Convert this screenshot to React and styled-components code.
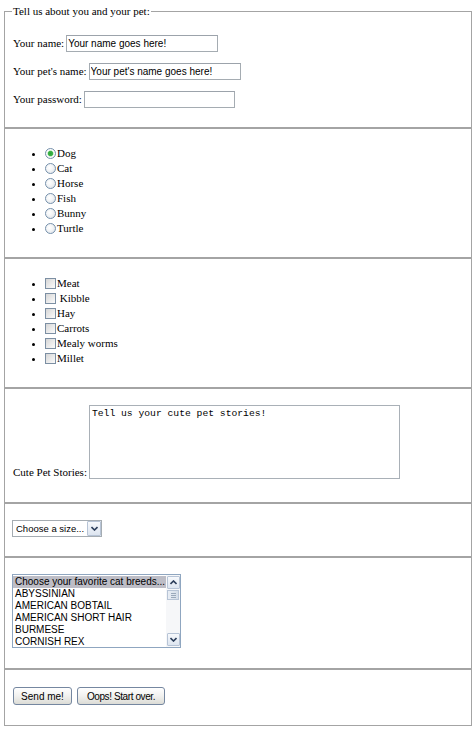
import React from "react";
import styled, { createGlobalStyle } from "styled-components";

const GlobalStyle = createGlobalStyle`
  html, body {
    margin: 0;
    padding: 0;
    background: #ffffff;
  }
  body {
    font-family: "Liberation Serif", "Times New Roman", serif;
    font-size: 11px;
    color: #000000;
  }
`;

const Page = styled.form`
  padding: 4px 3px 0 4px;
  width: 475px;
  box-sizing: border-box;
`;

const Fieldset = styled.fieldset`
  margin: 0;
  border: 1px solid #a4a4a4;
  padding: ${({ $pad }) => $pad || "16px 8px 20px 8px"};
  min-width: 0;
`;

const Legend = styled.legend`
  padding: 0 1px;
  margin-left: -1px;
  line-height: 14px;
  font-size: 11px;
`;

const Rows = styled.div`
  display: flex;
  flex-direction: column;
  gap: 11px;
`;

const Row = styled.div`
  display: flex;
  align-items: center;
  gap: 2px;
  height: 17px;
`;

const Label = styled.label`
  line-height: 13px;
  white-space: nowrap;
`;

const TextInput = styled.input`
  box-sizing: border-box;
  width: ${({ $w }) => $w || 152}px;
  height: 17px;
  margin: 0;
  padding: 0 1px;
  border: 1px solid #a5acb2;
  border-top-color: #9ca3ab;
  font-family: "Liberation Sans", Arial, sans-serif;
  font-size: 10px;
  color: #000;
  background: #fff;
  outline: none;
`;

const BulletList = styled.ul`
  margin: 0;
  padding: 0 0 0 40px;
  list-style: disc;
`;

const Item = styled.li`
  line-height: 15px;
  height: 15px;
`;

const Choice = styled.label`
  display: inline-flex;
  align-items: center;
  gap: 1px;
  height: 15px;
  vertical-align: top;
  white-space: pre;
`;

const Radio = styled.input.attrs({ type: "radio" })`
  appearance: none;
  box-sizing: border-box;
  width: 11px;
  height: 11px;
  margin: 0;
  border: 1px solid #7590ab;
  border-radius: 50%;
  background: radial-gradient(circle at 40% 40%, #ffffff 0, #f2f4f6 45%, #d4dae1 100%);

  &:checked {
    background: radial-gradient(
      circle,
      #2ea23a 0,
      #3bb347 2.2px,
      #c9ebcb 3px,
      #ffffff 3.6px,
      #e3e7eb 100%
    );
  }
`;

const Checkbox = styled.input.attrs({ type: "checkbox" })`
  appearance: none;
  box-sizing: border-box;
  width: 11px;
  height: 11px;
  margin: 0;
  border: 1px solid #7c8fa3;
  background: linear-gradient(135deg, #d6d6d6 0%, #ebebeb 55%, #fbfbfb 100%);
`;

const StoryRow = styled.div`
  display: flex;
  align-items: flex-end;
  gap: 2px;
`;

const StoryLabel = styled.label`
  line-height: 13px;
`;

const Story = styled.textarea`
  box-sizing: border-box;
  width: 311px;
  height: 74px;
  margin: 0;
  padding: 2px 2px;
  border: 1px solid #a9b0b7;
  resize: none;
  font-family: "Liberation Mono", "Courier New", monospace;
  font-size: 9.7px;
  line-height: 11px;
  color: #000;
  outline: none;
`;

const SelectBox = styled.div`
  display: inline-flex;
  align-items: stretch;
  box-sizing: border-box;
  height: 17px;
  border: 1px solid #a5acb2;
  background: #fff;
`;

const NativeSelect = styled.select`
  appearance: none;
  border: none;
  margin: 0;
  padding: 0 1px 0 3px;
  font-family: "Liberation Sans", Arial, sans-serif;
  font-size: 9.5px;
  color: #000;
  background: transparent;
  outline: none;
  width: 74px;
`;

const ArrowButton = styled.span`
  display: flex;
  align-items: center;
  justify-content: center;
  box-sizing: border-box;
  width: ${({ $w }) => $w || 14}px;
  height: ${({ $h }) => $h || 15}px;
  border: 1px solid #b7c4d6;
  border-radius: 1px;
  background: linear-gradient(#f7f9fc, #dde5f0);
  flex-shrink: 0;
`;

const ListBox = styled.div`
  display: flex;
  box-sizing: border-box;
  width: 169px;
  height: 74px;
  border: 1px solid #8fa6c0;
  background: #fff;
  font-family: "Liberation Sans", Arial, sans-serif;
  font-size: 10px;
  overflow: hidden;
`;

const Options = styled.div`
  flex: 1;
  display: flex;
  flex-direction: column;
  padding-top: 1px;
`;

const Option = styled.div`
  height: 12px;
  line-height: 12px;
  padding-left: 2px;
  white-space: nowrap;
  background: ${({ $selected }) => ($selected ? "#bdbdc6" : "transparent")};
`;

const ScrollTrack = styled.div`
  width: 14px;
  display: flex;
  flex-direction: column;
  align-items: center;
  background: #f6f7f9;
  padding: 1px 0;
  box-sizing: border-box;
`;

const Thumb = styled.div`
  width: 12px;
  height: 10px;
  margin-top: 1px;
  box-sizing: border-box;
  border: 1px solid #b7c4d6;
  background: linear-gradient(90deg, #e9eef5, #d4dde9);
  display: flex;
  flex-direction: column;
  justify-content: center;
  align-items: center;
  gap: 1px;

  & > i {
    display: block;
    width: 5px;
    height: 1px;
    background: #9aa9bb;
  }
`;

const Spacer = styled.div`
  flex: 1;
`;

const Buttons = styled.div`
  display: flex;
  gap: 5px;
`;

const Button = styled.button`
  box-sizing: border-box;
  width: ${({ $w }) => $w}px;
  height: 18px;
  margin: 0;
  padding: 0;
  border: 1px solid #7587a0;
  border-radius: 3px;
  background: linear-gradient(#ffffff 0%, #f1f1ef 50%, #dcdcd6 100%);
  font-family: "Liberation Sans", Arial, sans-serif;
  font-size: 10px;
  color: #000;
  letter-spacing: ${({ $ls }) => $ls || "0"};
`;

const Chevron = ({ up }) => (
  <svg width="7" height="5" viewBox="0 0 7 5">
    <path
      d={up ? "M0.5 4 L3.5 1 L6.5 4" : "M0.5 1 L3.5 4 L6.5 1"}
      fill="none"
      stroke="#2c3e5a"
      strokeWidth="1.6"
    />
  </svg>
);

const pets = ["Dog", "Cat", "Horse", "Fish", "Bunny", "Turtle"];
const foods = ["Meat", " Kibble", "Hay", "Carrots", "Mealy worms", "Millet"];
const breeds = [
  "Choose your favorite cat breeds...",
  "ABYSSINIAN",
  "AMERICAN BOBTAIL",
  "AMERICAN SHORT HAIR",
  "BURMESE",
  "CORNISH REX",
];

export default function App() {
  return (
    <>
      <GlobalStyle />
      <Page onSubmit={(e) => e.preventDefault()}>
        <Fieldset $pad="17px 8px 19px 8px">
          <Legend>Tell us about you and your pet:</Legend>
          <Rows>
            <Row>
              <Label htmlFor="name">Your name:</Label>
              <TextInput id="name" defaultValue="Your name goes here!" />
            </Row>
            <Row>
              <Label htmlFor="petname">Your pet's name:</Label>
              <TextInput id="petname" defaultValue="Your pet's name goes here!" />
            </Row>
            <Row>
              <Label htmlFor="pw">Your password:</Label>
              <TextInput id="pw" type="password" $w={151} />
            </Row>
          </Rows>
        </Fieldset>

        <Fieldset $pad="17px 8px 21px 0">
          <BulletList>
            {pets.map((p, i) => (
              <Item key={p}>
                <Choice>
                  <Radio name="pet" defaultChecked={i === 0} />
                  {p}
                </Choice>
              </Item>
            ))}
          </BulletList>
        </Fieldset>

        <Fieldset $pad="17px 8px 21px 0">
          <BulletList>
            {foods.map((f) => (
              <Item key={f}>
                <Choice>
                  <Checkbox />
                  {f}
                </Choice>
              </Item>
            ))}
          </BulletList>
        </Fieldset>

        <Fieldset $pad="16px 8px 23px 8px">
          <StoryRow>
            <StoryLabel htmlFor="stories">Cute Pet Stories:</StoryLabel>
            <Story id="stories" defaultValue="Tell us your cute pet stories!" />
          </StoryRow>
        </Fieldset>

        <Fieldset $pad="16px 7px 19px 7px">
          <SelectBox>
            <NativeSelect defaultValue="">
              <option value="">Choose a size...</option>
              <option>Small</option>
              <option>Medium</option>
              <option>Large</option>
            </NativeSelect>
            <ArrowButton $w={14} $h={15}>
              <Chevron />
            </ArrowButton>
          </SelectBox>
        </Fieldset>

        <Fieldset $pad="16px 7px 20px 7px">
          <ListBox role="listbox">
            <Options>
              {breeds.map((b, i) => (
                <Option key={b} $selected={i === 0}>
                  {b}
                </Option>
              ))}
            </Options>
            <ScrollTrack>
              <ArrowButton $w={13} $h={13}>
                <Chevron up />
              </ArrowButton>
              <Thumb>
                <i />
                <i />
                <i />
              </Thumb>
              <Spacer />
              <ArrowButton $w={13} $h={13}>
                <Chevron />
              </ArrowButton>
            </ScrollTrack>
          </ListBox>
        </Fieldset>

        <Fieldset $pad="17px 8px 20px 8px">
          <Buttons>
            <Button type="submit" $w={59}>Send me!</Button>
            <Button type="reset" $w={88} $ls="-0.4px">Oops! Start over.</Button>
          </Buttons>
        </Fieldset>
      </Page>
    </>
  );
}
